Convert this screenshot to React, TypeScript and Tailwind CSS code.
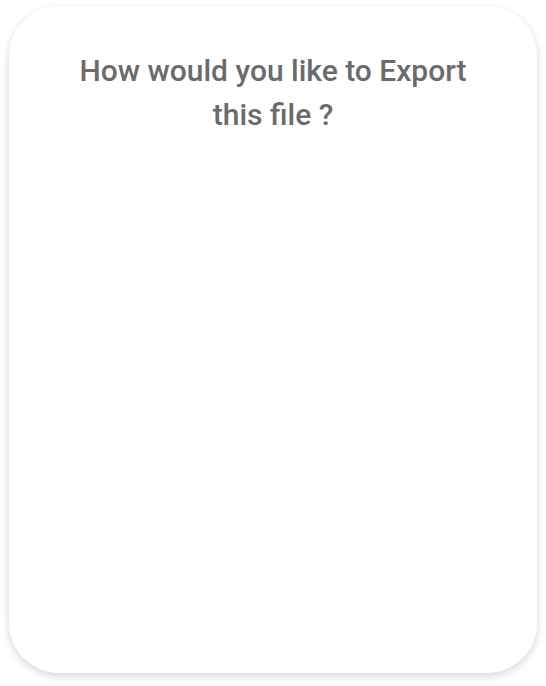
export default function App() {
  return (
    <div className="w-[546px] h-[686px] bg-white pl-[9px] pt-[6px]">
      <div className="w-[528px] h-[667px] rounded-[50px] bg-white shadow-[0_3px_8px_rgba(0,0,0,0.16)] px-[50px] pt-[43px]">
        <h1
          className="text-center text-[30px] leading-[44px] text-[#6b6b6b] font-medium"
          style={{ fontFamily: "Roboto, 'Liberation Sans', sans-serif" }}
        >
          How would you like to Export this file ?
        </h1>
      </div>
    </div>
  );
}
